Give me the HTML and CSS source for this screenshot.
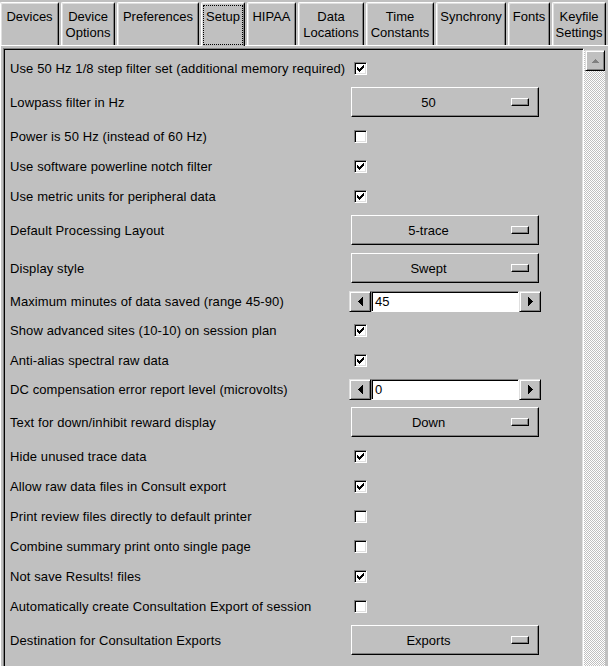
FILE: index.html
```html
<!DOCTYPE html>
<html>
<head>
<meta charset="utf-8">
<link rel="stylesheet" href="styles.css">
</head>
<body>
<div class="tabs">
  <div class="tab w-devices">Devices</div>
  <div class="tab w-options">Device<br>Options</div>
  <div class="tab w-prefs">Preferences</div>
  <div class="tab w-setup selected"><span class="focus">Setup</span></div>
  <div class="tab w-hipaa">HIPAA</div>
  <div class="tab w-data">Data<br>Locations</div>
  <div class="tab w-time">Time<br>Constants</div>
  <div class="tab w-sync">Synchrony</div>
  <div class="tab w-fonts">Fonts</div>
  <div class="tab w-key">Keyfile<br>Settings</div>
</div>
<div class="panel">
  <div class="frame">
    <div class="row"><span class="label">Use 50 Hz 1/8 step filter set (additional memory required)</span><span class="check"><svg width="7" height="7" viewBox="0 0 7 7"><path d="M0 2h1v1h1v1h1V3h1V2h1V1h1V0h1v3H6v1H5v1H4v1H3v1H2V6H1V5H0z"/></svg></span></div>
    <div class="row menu"><span class="label">Lowpass filter in Hz</span><div class="optmenu"><span class="optval">50</span><span class="indicator"></span></div></div>
    <div class="row"><span class="label">Power is 50 Hz (instead of 60 Hz)</span><span class="check"></span></div>
    <div class="row"><span class="label">Use software powerline notch filter</span><span class="check"><svg width="7" height="7" viewBox="0 0 7 7"><path d="M0 2h1v1h1v1h1V3h1V2h1V1h1V0h1v3H6v1H5v1H4v1H3v1H2V6H1V5H0z"/></svg></span></div>
    <div class="row"><span class="label">Use metric units for peripheral data</span><span class="check"><svg width="7" height="7" viewBox="0 0 7 7"><path d="M0 2h1v1h1v1h1V3h1V2h1V1h1V0h1v3H6v1H5v1H4v1H3v1H2V6H1V5H0z"/></svg></span></div>
    <div class="row menu"><span class="label">Default Processing Layout</span><div class="optmenu"><span class="optval">5-trace</span><span class="indicator"></span></div></div>
    <div class="row menu"><span class="label">Display style</span><div class="optmenu"><span class="optval">Swept</span><span class="indicator"></span></div></div>
    <div class="row spinrow"><span class="label">Maximum minutes of data saved (range 45-90)</span><div class="spin"><span class="arrowbtn"><svg width="5" height="9" viewBox="0 0 5 9"><path d="M4 0h1v9H4V8H3V7H2V6H1V5H0V4h1V3h1V2h1V1h1z"/></svg></span><span class="field">45</span><span class="arrowbtn"><svg width="5" height="9" viewBox="0 0 5 9"><path d="M0 0h1v1h1v1h1v1h1v1h1v1H4v1H3v1H2v1H1v1H0z"/></svg></span></div></div>
    <div class="row"><span class="label">Show advanced sites (10-10) on session plan</span><span class="check"><svg width="7" height="7" viewBox="0 0 7 7"><path d="M0 2h1v1h1v1h1V3h1V2h1V1h1V0h1v3H6v1H5v1H4v1H3v1H2V6H1V5H0z"/></svg></span></div>
    <div class="row"><span class="label">Anti-alias spectral raw data</span><span class="check"><svg width="7" height="7" viewBox="0 0 7 7"><path d="M0 2h1v1h1v1h1V3h1V2h1V1h1V0h1v3H6v1H5v1H4v1H3v1H2V6H1V5H0z"/></svg></span></div>
    <div class="row spinrow"><span class="label">DC compensation error report level (microvolts)</span><div class="spin"><span class="arrowbtn"><svg width="5" height="9" viewBox="0 0 5 9"><path d="M4 0h1v9H4V8H3V7H2V6H1V5H0V4h1V3h1V2h1V1h1z"/></svg></span><span class="field">0</span><span class="arrowbtn"><svg width="5" height="9" viewBox="0 0 5 9"><path d="M0 0h1v1h1v1h1v1h1v1h1v1H4v1H3v1H2v1H1v1H0z"/></svg></span></div></div>
    <div class="row menu"><span class="label">Text for down/inhibit reward display</span><div class="optmenu"><span class="optval">Down</span><span class="indicator"></span></div></div>
    <div class="row"><span class="label">Hide unused trace data</span><span class="check"><svg width="7" height="7" viewBox="0 0 7 7"><path d="M0 2h1v1h1v1h1V3h1V2h1V1h1V0h1v3H6v1H5v1H4v1H3v1H2V6H1V5H0z"/></svg></span></div>
    <div class="row"><span class="label">Allow raw data files in Consult export</span><span class="check"><svg width="7" height="7" viewBox="0 0 7 7"><path d="M0 2h1v1h1v1h1V3h1V2h1V1h1V0h1v3H6v1H5v1H4v1H3v1H2V6H1V5H0z"/></svg></span></div>
    <div class="row"><span class="label">Print review files directly to default printer</span><span class="check"></span></div>
    <div class="row"><span class="label">Combine summary print onto single page</span><span class="check"></span></div>
    <div class="row"><span class="label">Not save Results! files</span><span class="check"><svg width="7" height="7" viewBox="0 0 7 7"><path d="M0 2h1v1h1v1h1V3h1V2h1V1h1V0h1v3H6v1H5v1H4v1H3v1H2V6H1V5H0z"/></svg></span></div>
    <div class="row"><span class="label">Automatically create Consultation Export of session</span><span class="check"></span></div>
    <div class="row menu"><span class="label">Destination for Consultation Exports</span><div class="optmenu"><span class="optval">Exports</span><span class="indicator"></span></div></div>
  </div>
  <div class="scrollbar">
    <div class="sbbtn"><svg width="7" height="4" viewBox="0 0 7 4"><path d="M3 0h1v1h1v1h1v1h1v1H0V3h1V2h1V1h1z"/></svg></div>
  </div>
</div>
</body>
</html>
```
FILE: styles.css
```css
html, body {
  margin: 0;
  padding: 0;
}
body {
  width: 608px;
  height: 666px;
  overflow: hidden;
  background: #c0c0c0;
  color: #000;
  font-family: "Liberation Sans", Arial, sans-serif;
  font-size: 13px;
}
.tabs {
  display: flex;
  align-items: flex-start;
  gap: 2px;
  height: 44px;
  padding-top: 2px;
  background: linear-gradient(#fff, #fff) left bottom / 100% 1px no-repeat;
}
.tab {
  box-sizing: border-box;
  flex: none;
  height: 43px;
  padding: 6px 0 0 0;
  border-top: 1px solid #fff;
  border-left: 1px solid #fff;
  border-right: 1px solid #000;
  border-radius: 2px 2px 0 0;
  box-shadow: inset 1px 1px #dfdfdf, inset -1px 0 #808080;
  text-align: center;
  line-height: 16px;
  white-space: nowrap;
}
.w-devices { width: 59px; }
.w-options { width: 54px; }
.w-prefs { width: 82px; }
.w-setup { width: 44px; }
.w-hipaa { width: 49px; }
.w-data { width: 66px; }
.w-time { width: 68px; }
.w-sync { width: 70px; }
.w-fonts { width: 42px; }
.w-key { width: 54px; }
.tab.selected {
  height: 44px;
  padding: 2px 1px 0 1px;
  background: #c0c0c0;
}
.focus {
  display: block;
  box-sizing: border-box;
  height: 40px;
  padding: 4px 0 0 0;
  outline: 1px dotted #000;
  outline-offset: -1px;
}
.panel {
  display: flex;
  align-items: flex-start;
  height: 620px;
  padding-top: 2px;
  border-left: 1px solid #fff;
}
.frame {
  box-sizing: border-box;
  width: 581px;
  height: 640px;
  margin-left: 2px;
  padding: 4px 0 0 6px;
  border: 1px solid;
  border-color: #808080 #fff #fff #808080;
  box-shadow: inset 1px 1px #000, inset -1px -1px #dfdfdf;
}
.row {
  display: grid;
  grid-template-columns: 341px auto;
  align-items: center;
  height: 30px;
}
.row.menu {
  box-sizing: border-box;
  height: 38px;
  padding: 4px 0;
}
.row.spinrow {
  height: 28px;
}
.label {
  white-space: nowrap;
  letter-spacing: 0.1px;
}
.check {
  box-sizing: border-box;
  width: 13px;
  height: 13px;
  margin-left: 3px;
  padding: 2px 0 0 2px;
  background: #fff;
  border: 1px solid;
  border-color: #808080 #fff #fff #808080;
  box-shadow: inset 1px 1px #000, inset -1px -1px #dfdfdf;
  display: flex;
  align-items: flex-start;
}
.check svg {
  display: block;
}
.optmenu {
  box-sizing: border-box;
  width: 188px;
  height: 30px;
  display: flex;
  align-items: center;
  padding-right: 9px;
  border: 1px solid;
  border-color: #fff #000 #000 #fff;
  box-shadow: inset -1px -1px #808080;
}
.optval {
  flex: 1;
  text-align: center;
}
.indicator {
  box-sizing: border-box;
  width: 18px;
  height: 8px;
  margin-left: 6px;
  border: 1px solid;
  border-color: #fff #000 #000 #fff;
  box-shadow: inset -1px -1px #808080;
}
.spin {
  display: flex;
  width: 192px;
  height: 21px;
  margin-left: -2px;
}
.arrowbtn {
  box-sizing: border-box;
  width: 22px;
  height: 21px;
  display: flex;
  align-items: center;
  justify-content: center;
  border: 1px solid;
  border-color: #dfdfdf #000 #000 #dfdfdf;
  box-shadow: inset 1px 1px #fff, inset -1px -1px #808080;
}
.arrowbtn svg {
  display: block;
}
.field {
  box-sizing: border-box;
  flex: 1;
  height: 21px;
  padding: 2px 0 0 3px;
  background: #fff;
  border: 1px solid;
  border-color: #808080 #fff #fff #808080;
  box-shadow: inset 1px 1px #000;
  line-height: 16px;
}
.scrollbar {
  box-sizing: border-box;
  width: 21px;
  height: 620px;
  margin-top: 2px;
  padding-left: 1px;
  background: repeating-conic-gradient(#fff 0 25%, #c0c0c0 0 50%) 0 0 / 2px 2px;
}
.sbbtn {
  box-sizing: border-box;
  width: 20px;
  height: 21px;
  display: flex;
  align-items: center;
  justify-content: center;
  background: #c0c0c0;
  border: 1px solid;
  border-color: #dfdfdf #000 #000 #dfdfdf;
  box-shadow: inset 1px 1px #fff, inset -1px -1px #808080;
}
.sbbtn svg {
  display: block;
  fill: #808080;
}
```
